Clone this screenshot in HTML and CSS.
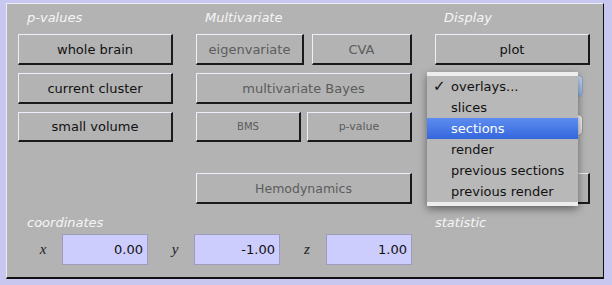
FILE: index.html
```html
<!DOCTYPE html>
<html lang="en">
<head>
  <meta charset="UTF-8">
  <title>SPM Results</title>
  <link rel="stylesheet" href="styles.css">
</head>
<body>
  <div class="panel">
    <div class="grid">
      <div class="head">p-values</div>
      <div class="head">Multivariate</div>
      <div class="head">Display</div>

      <button class="btn">whole brain</button>
      <div class="pair">
        <button class="btn off eigen">eigenvariate</button>
        <button class="btn off cva">CVA</button>
      </div>
      <button class="btn">plot</button>

      <button class="btn">current cluster</button>
      <button class="btn off">multivariate Bayes</button>
      <div class="popup-sel blue"></div>

      <button class="btn short">small volume</button>
      <div class="pair">
        <button class="btn off short tiny bms">BMS</button>
        <button class="btn off short small pval">p-value</button>
      </div>
      <div class="popup-sel grey"></div>

      <button class="btn off hemo last-row mid">Hemodynamics</button>
      <button class="btn last-row right"></button>
    </div>

    <div class="labels">
      <div class="head">coordinates</div>
      <div class="head">statistic</div>
    </div>

    <div class="coords">
      <span class="axis">x</span>
      <input class="coord" type="text" value="0.00">
      <span class="axis">y</span>
      <input class="coord" type="text" value="-1.00">
      <span class="axis">z</span>
      <input class="coord" type="text" value="1.00">
    </div>

    <div class="menu">
      <div class="item"><span class="tick">✓</span>overlays...</div>
      <div class="item">slices</div>
      <div class="item active">sections</div>
      <div class="item">render</div>
      <div class="item">previous sections</div>
      <div class="item">previous render</div>
    </div>
  </div>
</body>
</html>
```

FILE: styles.css
```css
body {
  margin: 0;
  padding: 3px 8px 0 6px;
  background: #c7c7ef;
  font-family: "DejaVu Sans", sans-serif;
  font-size: 13px;
  height: 285px;
  box-sizing: border-box;
  overflow: hidden;
}
.panel {
  position: relative;
  background: #b3b3b3;
  border-top: 1px solid #ececf8;
  border-left: 1px solid #ececf8;
  border-right: 1px solid #111;
  border-bottom: 2px solid #111;
  height: 276px;
  box-sizing: border-box;
  padding: 6px 0 0 11px;
}
.grid {
  display: grid;
  grid-template-columns: 155px 216px 155px;
  grid-template-rows: 16px 31px 31px 30px 15px 31px;
  column-gap: 23px;
  row-gap: 8px;
}
.last-row {
  grid-row: 6;
}
.last-row.mid {
  grid-column: 2;
}
.last-row.right {
  grid-column: 3;
}
.head {
  color: #f6f6f6;
  font-style: italic;
  line-height: 16px;
  padding-left: 9px;
}
.btn {
  font-family: "DejaVu Sans", sans-serif;
  font-size: 13px;
  color: #111;
  background: #b3b3b3;
  border-top: 1px solid #eeeefa;
  border-left: 1px solid #eeeefa;
  border-right: 2px solid #1a1a1a;
  border-bottom: 2px solid #1a1a1a;
  padding: 0;
  margin: 0;
  width: 100%;
  height: 31px;
  box-sizing: border-box;
}
.btn.short {
  height: 30px;
}
.btn.off {
  color: #5c5c5c;
}
.btn.tiny {
  font-size: 10px;
}
.btn.small {
  font-size: 11px;
}
.btn.hemo {
  font-size: 12.5px;
}
.pair {
  display: flex;
  justify-content: space-between;
}
.eigen {
  width: 108px;
}
.cva {
  width: 100px;
}
.bms {
  width: 105px;
}
.pval {
  width: 105px;
}
.popup-sel {
  margin-top: 2px;
  height: 22px;
  width: 148px;
  border-radius: 5px;
  box-sizing: border-box;
}
.popup-sel.blue {
  background: linear-gradient(#cfe0f6, #8fb3e6);
  border: 1px solid #8ea4c4;
}
.popup-sel.grey {
  background: linear-gradient(#fafafa, #dadada);
  border: 1px solid #9a9a9a;
}
.labels {
  display: flex;
  margin-top: 11px;
}
.labels .head:first-child {
  width: 399px;
}
.coords {
  display: flex;
  align-items: center;
  margin-top: 3px;
  padding-left: 10px;
}
.axis {
  width: 30px;
  margin-right: 4px;
  text-align: center;
  font-family: "Liberation Serif", serif;
  font-style: italic;
  font-size: 15px;
  color: #222;
}
.coord {
  width: 86px;
  height: 31px;
  box-sizing: border-box;
  margin: 0 12px 0 0;
  padding: 0 4px 0 0;
  text-align: right;
  font-family: "DejaVu Sans", sans-serif;
  font-size: 13px;
  color: #111;
  background: #ccccfd;
  border: 1px solid #9c9cbc;
  outline: none;
}
.menu {
  position: absolute;
  left: 420px;
  top: 68px;
  width: 151px;
  padding: 4px 0;
  background-color: #b8b8b8;
  background-image: linear-gradient(#ededed, #ededed), linear-gradient(#ededed, #ededed);
  background-size: 100% 4px, 100% 4px;
  background-position: top, bottom;
  background-repeat: no-repeat;
  box-shadow: 0 3px 8px rgba(0, 0, 0, 0.45);
}
.item {
  position: relative;
  height: 21px;
  line-height: 21px;
  padding-left: 24px;
  color: #111;
}
.item.active {
  background: linear-gradient(#5d8df0, #3566dc);
  color: #fff;
}
.tick {
  position: absolute;
  left: 6px;
  font-size: 15px;
}
```
